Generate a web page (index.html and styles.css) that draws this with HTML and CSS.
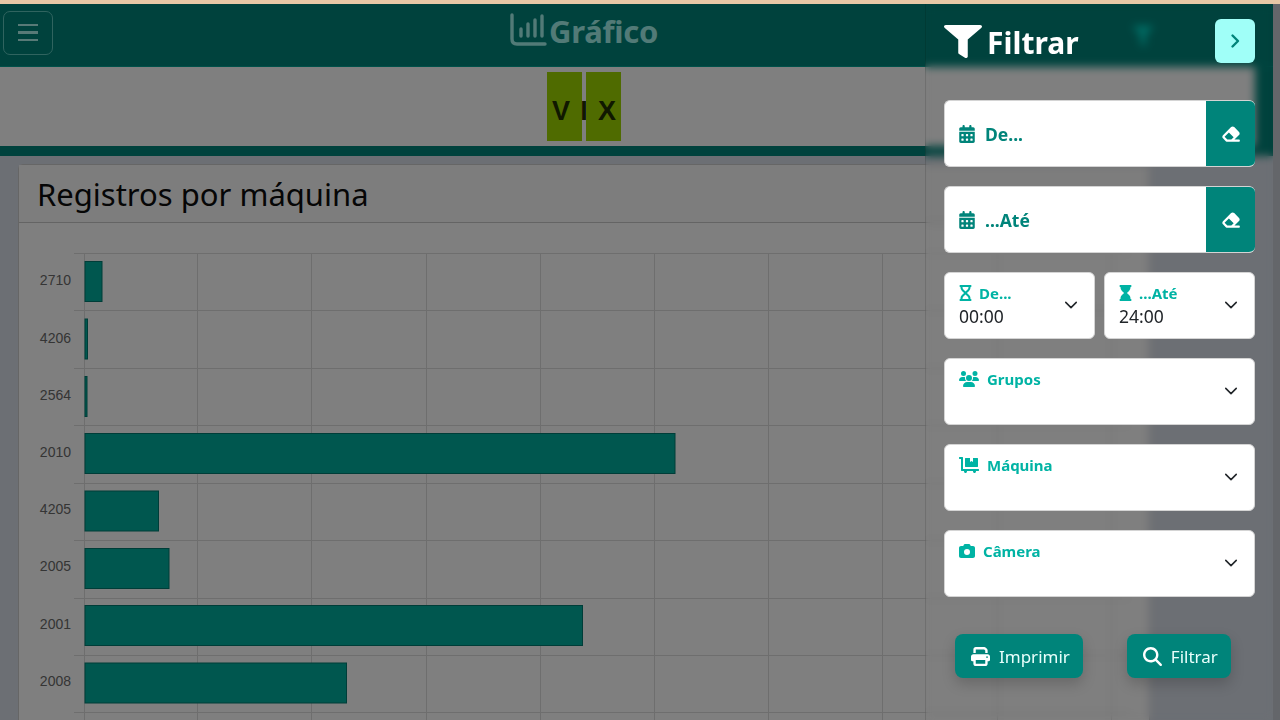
FILE: index.html
```html
<!DOCTYPE html>
<html lang="pt-BR">
<head>
<meta charset="utf-8">
<title>Gráfico</title>
<link rel="stylesheet" href="styles.css">
</head>
<body>
<div class="strip"></div>
<div class="stage">
  <div class="page">
    <header class="topbar">
      <button class="burger" aria-label="Menu"><span></span><span></span><span></span></button>
      <div class="logo">
        <svg class="logo-icon" viewBox="0 0 37 33"><path d="M2 2V26Q2 31 7 31H35" fill="none" stroke="currentColor" stroke-width="3.4" stroke-linecap="round"/><path d="M11 16V23M18 11V23M25 7V23M32 3V23" fill="none" stroke="currentColor" stroke-width="3.4" stroke-linecap="round"/></svg>
        <span>Gráfico</span>
      </div>
      <svg class="top-filter" viewBox="0 0 512 512"><path d="M487.976 0H24.028C2.71 0-8.047 25.866 7.058 40.971L192 225.941V432c0 7.831 3.821 15.17 10.237 19.662l80 55.98C298.02 518.69 320 507.493 320 487.98V225.941l184.947-184.97C520.021 25.896 509.338 0 487.976 0z"/></svg>
    </header>
    <div class="band">
      <div class="brandbar">
        <div class="vix"><b class="tile tile-v">V</b><b class="mid">I</b><b class="tile tile-x">X</b></div>
      </div>
    </div>
    <main class="content">
      <section class="card">
        <h1 class="card-title">Registros por máquina</h1>
        <svg class="chart" viewBox="19 223 1130 520" width="1130" height="520">
          <g class="grid">
            <path d="M84 253V743M197 253V743M311 253V743M426 253V743M540 253V743M654 253V743M768 253V743M882 253V743M997 253V743M1111 253V743"/>
            <path d="M74 253H1130M74 310H1130M74 368H1130M74 425H1130M74 483H1130M74 540H1130M74 598H1130M74 655H1130M74 712H1130"/>
          </g>
          <g class="bars">
            <rect x="85" y="261.5" width="17" height="40"/>
            <rect x="85" y="319" width="2.5" height="40"/>
            <rect x="85" y="376.5" width="2" height="40"/>
            <rect x="85" y="433.5" width="590" height="40"/>
            <rect x="85" y="491" width="73.5" height="40"/>
            <rect x="85" y="548.5" width="84" height="40"/>
            <rect x="85" y="605.5" width="497.5" height="40"/>
            <rect x="85" y="663" width="261.5" height="40"/>
          </g>
          <g class="labels">
            <text x="71" y="285">2710</text>
            <text x="71" y="343">4206</text>
            <text x="71" y="400">2564</text>
            <text x="71" y="457">2010</text>
            <text x="71" y="514">4205</text>
            <text x="71" y="571">2005</text>
            <text x="71" y="629">2001</text>
            <text x="71" y="686">2008</text>
          </g>
        </svg>
      </section>
    </main>
  </div>
  <div class="dim"></div>
  <aside class="panel">
    <div class="panel-head">
      <svg class="funnel" viewBox="0 0 512 512" preserveAspectRatio="none"><path d="M487.976 0H24.028C2.71 0-8.047 25.866 7.058 40.971L192 225.941V432c0 7.831 3.821 15.17 10.237 19.662l80 55.98C298.02 518.69 320 507.493 320 487.98V225.941l184.947-184.97C520.021 25.896 509.338 0 487.976 0z"/></svg>
      <h2 class="panel-title">Filtrar</h2>
      <button class="collapse" aria-label="Fechar"><svg viewBox="0 0 16 16"><path d="M5.5 2.5 11 8l-5.5 5.5" fill="none" stroke="currentColor" stroke-width="2.4" stroke-linecap="round" stroke-linejoin="round"/></svg></button>
    </div>
    <div class="date-field">
      <div class="date-label"><svg class="ic-cal" viewBox="0 0 448 512"><use href="#cal"/></svg>De...</div>
      <button class="erase" aria-label="Limpar"><svg viewBox="0 0 576 512"><use href="#eraser"/></svg></button>
    </div>
    <div class="date-field">
      <div class="date-label"><svg class="ic-cal" viewBox="0 0 448 512"><use href="#cal"/></svg>...Até</div>
      <button class="erase" aria-label="Limpar"><svg viewBox="0 0 576 512"><use href="#eraser"/></svg></button>
    </div>
    <div class="time-row">
      <div class="select">
        <div class="sel-label"><svg class="ic-hour" viewBox="0 0 384 512"><path d="M0 32C0 14.3 14.3 0 32 0H352c17.7 0 32 14.3 32 32s-14.3 32-32 32V75c0 42.4-16.9 83.1-46.9 113.1L237.3 256l67.9 67.9c30 30 46.9 70.7 46.9 113.1v11c17.7 0 32 14.3 32 32s-14.3 32-32 32H32c-17.7 0-32-14.3-32-32s14.3-32 32-32V437c0-42.4 16.9-83.1 46.9-113.1L146.7 256 78.9 188.1C48.9 158.1 32 117.4 32 75V64C14.3 64 0 49.7 0 32zM96 64V75c0 25.5 10.1 49.9 28.1 67.9L192 210.7l67.9-67.9c18-18 28.1-42.4 28.1-67.9V64H96zm0 384H288V437c0-25.5-10.1-49.9-28.1-67.9L192 301.3l-67.9 67.9c-18 18-28.1 42.4-28.1 67.9v11z"/></svg>De...</div>
        <div class="sel-value">00:00</div>
        <svg class="chev" viewBox="0 0 16 16"><path d="M2 5l6 6 6-6" fill="none" stroke="currentColor" stroke-width="1.8" stroke-linecap="round" stroke-linejoin="round"/></svg>
      </div>
      <div class="select">
        <div class="sel-label"><svg class="ic-hour" viewBox="0 0 384 512"><path d="M32 0C14.3 0 0 14.3 0 32S14.3 64 32 64V75c0 42.4 16.9 83.1 46.9 113.1L146.7 256 78.9 323.9C48.9 353.9 32 394.6 32 437v11c-17.7 0-32 14.3-32 32s14.3 32 32 32H352c17.7 0 32-14.3 32-32s-14.3-32-32-32V437c0-42.4-16.9-83.1-46.9-113.1L237.3 256l67.9-67.9c30-30 46.9-70.7 46.9-113.1V64c17.7 0 32-14.3 32-32s-14.3-32-32-32H32z"/></svg>...Até</div>
        <div class="sel-value">24:00</div>
        <svg class="chev" viewBox="0 0 16 16"><path d="M2 5l6 6 6-6" fill="none" stroke="currentColor" stroke-width="1.8" stroke-linecap="round" stroke-linejoin="round"/></svg>
      </div>
    </div>
    <div class="select">
      <div class="sel-label"><svg class="ic-wide" viewBox="0 0 640 512"><path d="M144 0a80 80 0 1 1 0 160A80 80 0 1 1 144 0zM512 0a80 80 0 1 1 0 160A80 80 0 1 1 512 0zM0 298.7C0 239.8 47.8 192 106.7 192h42.7c15.9 0 31 3.5 44.6 9.7c-1.3 7.2-1.9 14.7-1.9 22.3c0 38.2 16.8 72.5 43.3 96c-.2 0-.4 0-.7 0H21.3C9.6 320 0 310.4 0 298.7zM405.3 320c-.2 0-.4 0-.7 0c26.6-23.5 43.3-57.8 43.3-96c0-7.6-.7-15-1.9-22.3c13.6-6.3 28.7-9.7 44.6-9.7h42.7C592.2 192 640 239.8 640 298.7c0 11.8-9.6 21.3-21.3 21.3H405.3zM224 224a96 96 0 1 1 192 0 96 96 0 1 1 -192 0zM128 485.3C128 411.7 187.7 352 261.3 352H378.7C452.3 352 512 411.7 512 485.3c0 14.7-11.9 26.7-26.7 26.7H154.7c-14.7 0-26.7-11.9-26.7-26.7z"/></svg>Grupos</div>
      <svg class="chev" viewBox="0 0 16 16"><path d="M2 5l6 6 6-6" fill="none" stroke="currentColor" stroke-width="1.8" stroke-linecap="round" stroke-linejoin="round"/></svg>
    </div>
    <div class="select">
      <div class="sel-label"><svg class="ic-wide" viewBox="0 0 640 512"><path d="M208 320h384c8.8 0 16-7.2 16-16V48c0-8.8-7.2-16-16-16H448v128l-48-32-48 32V32H208c-8.8 0-16 7.2-16 16v256c0 8.8 7.2 16 16 16zm416 64H128V16c0-8.8-7.2-16-16-16H16C7.2 0 0 7.2 0 16v32c0 8.8 7.2 16 16 16h48v368c0 8.8 7.2 16 16 16h82.9c-1.8 5-2.9 10.4-2.9 16 0 26.5 21.5 48 48 48s48-21.5 48-48c0-5.6-1.2-11-2.9-16H451c-1.8 5-2.9 10.4-2.9 16 0 26.5 21.5 48 48 48s48-21.5 48-48c0-5.6-1.2-11-2.9-16H624c8.8 0 16-7.2 16-16v-32c0-8.8-7.2-16-16-16z"/></svg>Máquina</div>
      <svg class="chev" viewBox="0 0 16 16"><path d="M2 5l6 6 6-6" fill="none" stroke="currentColor" stroke-width="1.8" stroke-linecap="round" stroke-linejoin="round"/></svg>
    </div>
    <div class="select">
      <div class="sel-label"><svg class="ic-cam" viewBox="0 0 512 512"><path d="M149.1 64.8L138.7 96H64C28.7 96 0 124.7 0 160V416c0 35.3 28.7 64 64 64H448c35.3 0 64-28.7 64-64V160c0-35.3-28.7-64-64-64H373.3L362.9 64.8C356.4 45.2 338.1 32 317.4 32H194.6c-20.7 0-39 13.2-45.5 32.8zM256 192a96 96 0 1 1 0 192 96 96 0 1 1 0-192z"/></svg>Câmera</div>
      <svg class="chev" viewBox="0 0 16 16"><path d="M2 5l6 6 6-6" fill="none" stroke="currentColor" stroke-width="1.8" stroke-linecap="round" stroke-linejoin="round"/></svg>
    </div>
    <div class="actions">
      <button class="action"><svg viewBox="0 0 512 512"><path d="M128 0C92.7 0 64 28.7 64 64v96h64V64H354.7L384 93.3V160h64V93.3c0-17-6.7-33.3-18.7-45.3L400 18.7C388 6.7 371.7 0 354.7 0H128zM384 352v32 64H128V384 368 352H384zm64 32h32c17.7 0 32-14.3 32-32V256c0-35.3-28.7-64-64-64H64c-35.3 0-64 28.7-64 64v96c0 17.7 14.3 32 32 32H64v64c0 35.3 28.7 64 64 64H384c35.3 0 64-28.7 64-64V384zM432 248a24 24 0 1 1 0 48 24 24 0 1 1 0-48z"/></svg>Imprimir</button>
      <button class="action"><svg viewBox="0 0 512 512"><path d="M416 208c0 45.9-14.9 88.3-40 122.7L502.6 457.4c12.5 12.5 12.5 32.8 0 45.3s-32.8 12.5-45.3 0L330.7 376c-34.4 25.2-76.8 40-122.7 40C93.1 416 0 322.9 0 208S93.1 0 208 0S416 93.1 416 208zM208 352a144 144 0 1 0 0-288 144 144 0 1 0 0 288z"/></svg>Filtrar</button>
    </div>
  </aside>
</div>
<svg class="defs" aria-hidden="true">
  <symbol id="cal" viewBox="0 0 448 512"><path d="M128 0c17.7 0 32 14.3 32 32V64H288V32c0-17.7 14.3-32 32-32s32 14.3 32 32V64h48c26.5 0 48 21.5 48 48v48H0V112C0 85.5 21.5 64 48 64H96V32c0-17.7 14.3-32 32-32zM0 192H448V464c0 26.5-21.5 48-48 48H48c-26.5 0-48-21.5-48-48V192zm64 80v32c0 8.8 7.2 16 16 16h32c8.8 0 16-7.2 16-16V272c0-8.8-7.2-16-16-16H80c-8.8 0-16 7.2-16 16zm128 0v32c0 8.8 7.2 16 16 16h32c8.8 0 16-7.2 16-16V272c0-8.8-7.2-16-16-16H208c-8.8 0-16 7.2-16 16zm144-16c-8.8 0-16 7.2-16 16v32c0 8.8 7.2 16 16 16h32c8.8 0 16-7.2 16-16V272c0-8.8-7.2-16-16-16H336zM64 400v32c0 8.8 7.2 16 16 16h32c8.8 0 16-7.2 16-16V400c0-8.8-7.2-16-16-16H80c-8.8 0-16 7.2-16 16zm144-16c-8.8 0-16 7.2-16 16v32c0 8.8 7.2 16 16 16h32c8.8 0 16-7.2 16-16V400c0-8.8-7.2-16-16-16H208c-8.8 0-16 7.2-16 16zm112 16v32c0 8.8 7.2 16 16 16h32c8.8 0 16-7.2 16-16V400c0-8.8-7.2-16-16-16H336c-8.8 0-16 7.2-16 16z"/></symbol>
  <symbol id="eraser" viewBox="0 0 576 512"><path d="M290.7 57.4L57.4 290.7c-25 25-25 65.5 0 90.5l80 80c12 12 28.3 18.7 45.3 18.7H288h9.4H512c17.7 0 32-14.3 32-32s-14.3-32-32-32H387.9L518.6 285.3c25-25 25-65.5 0-90.5L381.3 57.4c-25-25-65.6-25-90.5 0zM297.4 416H288l-105.4 0-80-80L227.3 211.3 364.7 348.7 297.4 416z"/></symbol>
</svg>
</body>
</html>
```
FILE: styles.css
```css
* { box-sizing: border-box; }
html, body { margin: 0; height: 720px; overflow: hidden; }
body { display: flex; flex-direction: column; background: #c9ccd4; font-family: "Noto Sans", "Open Sans", sans-serif; }
button { font-family: inherit; border: 0; padding: 0; }
.defs { position: absolute; width: 0; height: 0; }

.strip { height: 4px; flex: none; background: #e8c8a6; }
.stage { position: relative; flex: 1; overflow: hidden; }
.page { width: 1273px; height: 100%; background: #d9dee8; display: flex; flex-direction: column; }
.dim { position: absolute; inset: 0; background: rgba(0, 0, 0, .5); }

.topbar { height: 63px; flex: none; background: #00847a; display: flex; align-items: center; padding-left: 3px; border-bottom: 1px solid #00a092; }
.burger { width: 50px; height: 44px; background: transparent; border: 1px solid #60c8bf; border-radius: 7px; display: flex; flex-direction: column; align-items: center; justify-content: center; gap: 5px; margin-top: -5px; }
.burger span { width: 20px; height: 2.6px; background: #b0f5ee; }
.logo { display: flex; align-items: center; margin-left: 457px; color: #a4f5ee; margin-top: -9px; }
.logo-icon { width: 37px; height: 33px; margin-top: -2px; }
.logo span { font-size: 31px; font-weight: 700; line-height: 40px; letter-spacing: -.25px; margin-left: 2px; }
.top-filter { width: 20px; height: 20px; fill: #00e0d0; margin-left: 475px; margin-top: 1px; }

.band { background: #00847a; padding-bottom: 10px; flex: none; }
.brandbar { width: 1255px; height: 79px; background: #fff; padding: 5px 0 5px 547px; }
.vix { display: flex; height: 69px; align-items: center; font-family: "Liberation Sans", Arial, sans-serif; font-size: 27px; line-height: 1; color: #203000; font-weight: 700; }
.tile { width: 35px; height: 69px; background: #9fd600; display: flex; align-items: center; justify-content: center; padding-top: 9px; }
.tile-v { padding-right: 7px; }
.tile-x { padding-left: 7px; }
.mid { width: 4px; display: flex; justify-content: center; padding-top: 9px; }

.content { flex: 1; padding: 8px 0 0 18px; min-height: 0; overflow: hidden; }
.card { width: 1132px; height: 700px; background: #fff; border: 1px solid #ccc; border-radius: 5px; }
.card-title { margin: 0; height: 58px; padding: 0 18px; font-size: 31px; font-weight: 400; line-height: 59px; color: #0c0c0c; border-bottom: 1px solid #c8c8c8; background: #fbfbfb; }
.chart { display: block; }
.grid path { fill: none; stroke: #dcdcdc; stroke-width: 1; shape-rendering: crispEdges; }
.bars rect { fill: #00ae9e; stroke: #007a70; stroke-width: 1; }
.labels text { font-family: "Liberation Sans", Arial, sans-serif; font-size: 14px; fill: #6a6a6a; text-anchor: end; }

.panel { position: absolute; top: 0; bottom: 0; left: 925px; width: 348px; padding: 15px 18px 0 18px; backdrop-filter: blur(4px); border-left: 1px solid rgba(0, 0, 0, .12); border-top-right-radius: 5px; display: flex; flex-direction: column; gap: 19px; }
.panel-head { height: 44px; margin-bottom: 18px; display: flex; align-items: center; flex: none; }
.funnel { width: 38px; height: 33px; fill: #fff; margin-right: 5px; margin-top: 1px; }
.panel-title { margin: 0; color: #fff; font-size: 30px; font-weight: 700; line-height: 44px; flex: 1; padding-top: 3px; }
.collapse { width: 40px; height: 44px; border-radius: 6px; background: #a0fff8; color: #00847a; display: flex; align-items: center; justify-content: center; }
.collapse svg { width: 16px; height: 16px; }

.date-field { height: 67px; flex: none; background: #fff; border-radius: 6px; display: flex; overflow: hidden; border: 1px solid #d4d4d4; border-width: 1px 0 1px 1px; }
.date-label { flex: 1; display: flex; align-items: center; padding-left: 14px; font-size: 17.5px; font-weight: 700; color: #00847a; }
.ic-cal { width: 16px; height: 18px; fill: #00847a; margin-right: 10px; }
.erase { width: 49px; background: #00847a; display: flex; align-items: center; justify-content: center; margin: -1px 0; }
.erase svg { width: 20px; height: 18px; fill: #fff; }

.time-row { display: flex; gap: 9px; flex: none; }
.time-row .select { flex: 1; }
.select { position: relative; height: 67px; flex: none; background: #fff; border-radius: 6px; border: 1px solid #d4d4d4; padding: 9px 14px 0; }
.sel-label { display: flex; align-items: center; height: 22px; font-size: 15px; font-weight: 700; color: #00b3a4; white-space: nowrap; }
.sel-value { font-size: 17.5px; line-height: 22px; color: #212529; margin-top: 1px; }
.ic-hour { width: 13px; height: 16px; fill: #00b3a4; margin-right: 7px; flex: none; }
.ic-wide { width: 20px; height: 16px; fill: #00b3a4; margin-right: 8px; flex: none; }
.ic-cam { width: 16px; height: 16px; fill: #00b3a4; margin-right: 8px; flex: none; }
.chev { position: absolute; right: 16px; top: 25px; width: 14px; height: 14px; color: #212529; }

.actions { display: flex; gap: 44px; padding-left: 11px; margin-top: 18px; flex: none; }
.action { height: 44px; padding: 0 13px 0 16px; border-radius: 8px; background: #00847a; color: #e8fffc; font-size: 17px; display: flex; align-items: center; gap: 9px; box-shadow: 0 6px 14px rgba(0, 0, 0, .18); }
.action svg { width: 19px; height: 19px; fill: #fff; }
```
